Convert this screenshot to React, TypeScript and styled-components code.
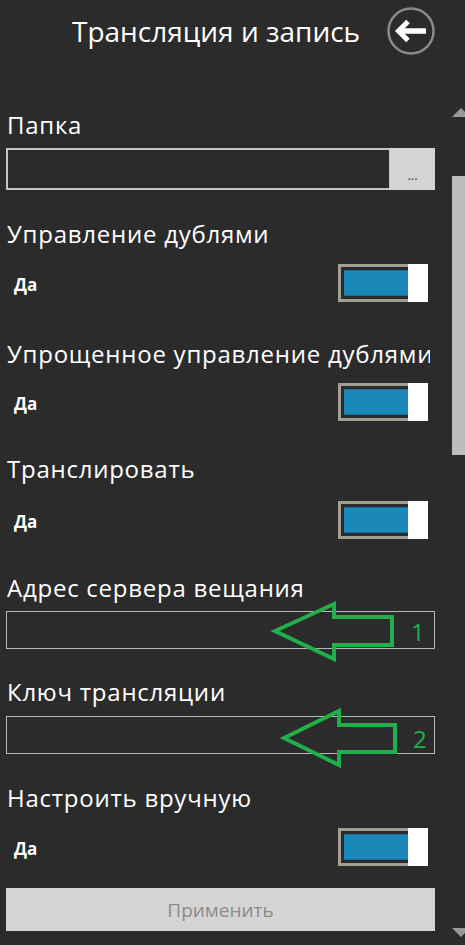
import React, { FC } from "react";
import styled, { createGlobalStyle } from "styled-components";

const GlobalStyle = createGlobalStyle`
  html, body {
    margin: 0;
    padding: 0;
    background: #2b2b2b;
  }
  * {
    box-sizing: border-box;
  }
`;

const FONT = `"Open Sans", "Noto Sans", sans-serif`;

const Page = styled.div`
  width: 465px;
  height: 945px;
  background: #2b2b2b;
  color: #ffffff;
  font-family: ${FONT};
  display: flex;
  flex-direction: column;
  overflow: hidden;
`;

const Header = styled.div`
  height: 100px;
  display: flex;
  align-items: flex-start;
  padding: 7px 0 0 72px;
`;

const Title = styled.h1`
  margin: 0;
  height: 47px;
  display: flex;
  align-items: center;
  font-size: 28px;
  font-weight: 400;
  white-space: nowrap;
`;

const BackButton = styled.button`
  margin-left: auto;
  margin-right: 30px;
  width: 48px;
  height: 48px;
  padding: 0;
  border: none;
  background: transparent;
  display: flex;
  align-items: center;
  justify-content: center;
`;

const Body = styled.div`
  flex: 1;
  display: flex;
  min-height: 0;
`;

const Content = styled.div`
  flex: 1;
  padding: 8px 17px 0 6px;
  display: flex;
  flex-direction: column;
`;

const Section = styled.div<{ $gap: number }>`
  margin-top: ${(p) => p.$gap}px;
  display: flex;
  flex-direction: column;
`;

const Label = styled.div<{ $after: number }>`
  height: 36px;
  line-height: 34px;
  padding-left: 1px;
  margin-bottom: ${(p) => p.$after}px;
  font-size: 24px;
  letter-spacing: 0.75px;
  white-space: nowrap;
  overflow: hidden;
  max-width: 424px;
`;

const FolderRow = styled.div`
  display: flex;
  height: 42px;
`;

const FolderInput = styled.div`
  flex: 1;
  border: 2px solid #c4c4c4;
  border-right-width: 1px;
`;

const BrowseButton = styled.button`
  width: 45px;
  border: none;
  background: #d4d4d4;
  color: #3c3c3c;
  font-family: ${FONT};
  font-size: 13px;
  padding: 0 0 6px;
  display: flex;
  align-items: flex-end;
  justify-content: center;
`;

const TextInput = styled.div`
  position: relative;
  height: 38px;
  border: 1px solid #b8b8b8;
`;

const ToggleRow = styled.div`
  height: 38px;
  display: flex;
  align-items: center;
  justify-content: space-between;
  padding: 0 7px 0 8px;
`;

const ToggleText = styled.span`
  font-size: 17px;
  font-weight: 700;
  margin-top: 3px;
`;

const Toggle = styled.div`
  width: 90px;
  height: 38px;
  display: flex;
  border: 3px solid #a49f94;
  border-right: none;
  padding: 3px 0 3px 3px;
  background: #2b2b2b;
`;

const ToggleFill = styled.div`
  flex: 1;
  background: #1a88b9;
  border-top: 1px solid #1b6f98;
  border-bottom: 1px solid #1b6f98;
`;

const ToggleThumb = styled.div`
  width: 20px;
  margin: -6px 0;
  background: #ffffff;
`;

const ApplyButton = styled.button`
  height: 43px;
  border: none;
  background: #d4d4d4;
  color: #8b8b8b;
  font-family: ${FONT};
  font-size: 19px;
  padding: 0;
`;

const Overlay = styled.svg`
  position: absolute;
  left: 0;
  top: 0;
  width: 100%;
  height: 100%;
  overflow: visible;
  pointer-events: none;
`;

const Mark = styled.span<{ $left: number; $top: number }>`
  position: absolute;
  left: ${(p) => p.$left}px;
  top: ${(p) => p.$top}px;
  color: #22ae4c;
  font-family: ${FONT};
  font-size: 24px;
  line-height: 24px;
`;

const ScrollBar = styled.div`
  width: 13px;
  display: flex;
  flex-direction: column;
`;

const ScrollArrow = styled.svg<{ $top?: boolean }>`
  display: block;
  width: 13px;
  height: 9px;
  margin-top: ${(p) => (p.$top ? "8px" : "auto")};
  margin-bottom: ${(p) => (p.$top ? "0" : "8px")};
`;

const Thumb = styled.div`
  margin-top: 59px;
  height: 279px;
  background: #bdbdbd;
`;

const BackIcon: FC = () => (
  <svg width="48" height="48" viewBox="0 0 48 48">
    <circle cx="24" cy="24" r="22.5" fill="none" stroke="#8a8a8a" strokeWidth="2.5" />
    <path d="M39 24 H14" stroke="#ffffff" strokeWidth="5.5" fill="none" />
    <path d="M21 14.5 L11.5 24 L21 33.5" stroke="#ffffff" strokeWidth="5" fill="none" strokeLinejoin="miter" />
  </svg>
);

const Switch: FC<{ label: string }> = ({ label }) => (
  <ToggleRow>
    <ToggleText>{label}</ToggleText>
    <Toggle>
      <ToggleFill />
      <ToggleThumb />
    </Toggle>
  </ToggleRow>
);

// green annotation arrows drawn over the inputs
const GreenArrow: FC<{ points: string }> = ({ points }) => (
  <Overlay>
    <polygon points={points} fill="none" stroke="#22ae4c" strokeWidth="4" strokeLinejoin="miter" />
  </Overlay>
);

const App: FC = () => {
  return (
    <Page>
      <GlobalStyle />
      <Header>
        <Title>Трансляция и запись</Title>
        <BackButton aria-label="Назад">
          <BackIcon />
        </BackButton>
      </Header>
      <Body>
        <Content>
          <Section $gap={0}>
            <Label $after={4}>Папка</Label>
            <FolderRow>
              <FolderInput />
              <BrowseButton>...</BrowseButton>
            </FolderRow>
          </Section>

          <Section $gap={27}>
            <Label $after={11}>Управление дублями</Label>
            <Switch label="Да" />
          </Section>

          <Section $gap={35}>
            <Label $after={10}>Упрощенное управление дублями</Label>
            <Switch label="Да" />
          </Section>

          <Section $gap={31}>
            <Label $after={13}>Транслировать</Label>
            <Switch label="Да" />
          </Section>

          <Section $gap={32}>
            <Label $after={4}>Адрес сервера вещания</Label>
            <TextInput>
              <GreenArrow points="268,19 327,-8 327,5 385,5 385,33 327,33 327,47" />
              <Mark $left={404} $top={8}>1</Mark>
            </TextInput>
          </Section>

          <Section $gap={26}>
            <Label $after={5}>Ключ трансляции</Label>
            <TextInput>
              <GreenArrow points="277,21 332,-6 332,8 388,8 388,35 332,35 332,48" />
              <Mark $left={406} $top={10}>2</Mark>
            </TextInput>
          </Section>

          <Section $gap={27}>
            <Label $after={11}>Настроить вручную</Label>
            <Switch label="Да" />
          </Section>

          <Section $gap={22}>
            <ApplyButton>Применить</ApplyButton>
          </Section>
        </Content>
        <ScrollBar>
          <ScrollArrow $top viewBox="0 0 13 9">
            <polygon points="0,9 9,0 18,9" fill="#9a9a9a" />
          </ScrollArrow>
          <Thumb />
          <ScrollArrow viewBox="0 0 13 9">
            <polygon points="0,0 9,9 18,0" fill="#9a9a9a" />
          </ScrollArrow>
        </ScrollBar>
      </Body>
    </Page>
  );
};

export default App;
